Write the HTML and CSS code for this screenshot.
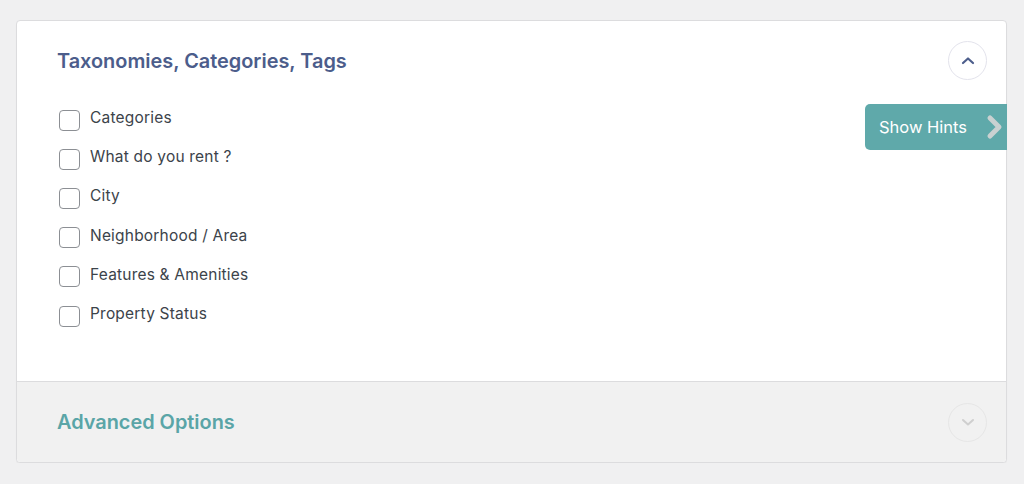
FILE: index.html
```html
<!DOCTYPE html>
<html>
<head>
<meta charset="utf-8">
<link rel="stylesheet" href="styles.css">
</head>
<body>
<div class="card">
  <section class="panel open">
    <div class="head">
      <h2 class="title">Taxonomies, Categories, Tags</h2>
      <span class="toggle">
        <svg width="14" height="9" viewBox="0 0 14 9"><path d="M2 7 L7 2.5 L12 7" fill="none" stroke="#4d5e8c" stroke-width="2.2" stroke-linecap="round" stroke-linejoin="round"/></svg>
      </span>
    </div>
    <ul class="list">
      <li class="row"><span class="box"></span><span class="label">Categories</span></li>
      <li class="row"><span class="box"></span><span class="label">What do you rent ?</span></li>
      <li class="row"><span class="box"></span><span class="label">City</span></li>
      <li class="row"><span class="box"></span><span class="label">Neighborhood / Area</span></li>
      <li class="row"><span class="box"></span><span class="label">Features &amp; Amenities</span></li>
      <li class="row"><span class="box"></span><span class="label">Property Status</span></li>
    </ul>
    <div class="hints">
      <span>Show Hints</span>
      <svg width="20" height="28" viewBox="0 0 20 28"><path d="M6 5 L15 14 L6 23" fill="none" stroke="#c9d1d1" stroke-width="5" stroke-linecap="round" stroke-linejoin="round"/></svg>
    </div>
  </section>
  <section class="panel closed">
    <div class="head">
      <h2 class="title adv">Advanced Options</h2>
      <span class="toggle faint">
        <svg width="14" height="9" viewBox="0 0 14 9"><path d="M2 2 L7 6.5 L12 2" fill="none" stroke="#cfcfcf" stroke-width="2" stroke-linecap="round" stroke-linejoin="round"/></svg>
      </span>
    </div>
  </section>
</div>
</body>
</html>
```

FILE: styles.css
```css
* { box-sizing: border-box; }
html, body { margin: 0; padding: 0; }
body {
  background: #f0f0f1;
  font-family: Inter, "Noto Sans", sans-serif;
  padding: 20px 18px 0 16px;
}
.card {
  width: 991px;
  border: 1px solid #dcdcde;
  border-radius: 4px;
  background: #fff;
  box-shadow: 0 1px 1px rgba(0,0,0,0.04);
}
.panel { position: relative; }
.panel.open {
  height: 361px;
  border-bottom: 1px solid #dcdcde;
  border-radius: 4px 4px 0 0;
}
.panel.closed {
  height: 80px;
  background: #f1f1f1;
  border-radius: 0 0 4px 4px;
}
.head {
  display: flex;
  align-items: center;
  justify-content: space-between;
  padding: 20px 19px 0 40px;
  height: 59px;
}
.title {
  margin: 0;
  font-size: 19.9px;
  font-weight: 600;
  color: #4c5d8b;
  letter-spacing: 0;
}
.title.adv { color: #5aa5a7; }
.toggle {
  width: 39px;
  height: 39px;
  border: 1px solid #e3e3ec;
  border-radius: 50%;
  display: flex;
  align-items: center;
  justify-content: center;
}
.toggle.faint { border-color: #e6e6e6; }
.list {
  list-style: none;
  margin: 0;
  padding: 18px 0 0 42px;
}
.row {
  display: flex;
  align-items: center;
  height: 39.2px;
  gap: 10px;
}
.box {
  width: 21px;
  height: 21px;
  border: 1px solid #8c8f94;
  border-radius: 4px;
  background: #fff;
  margin-top: 5px;
}
.label {
  font-size: 15.5px;
  color: #3c434a;
  letter-spacing: 0.2px;
}
.panel.closed .head { padding-top: 21px; }
.hints {
  position: absolute;
  top: 83px;
  right: -1px;
  width: 142px;
  height: 46px;
  background: #5fa9aa;
  border-radius: 5px 0 0 5px;
  display: flex;
  align-items: center;
  justify-content: space-between;
  padding: 0 3px 0 14px;
  color: #fff;
  font-size: 16.5px;
}
```
